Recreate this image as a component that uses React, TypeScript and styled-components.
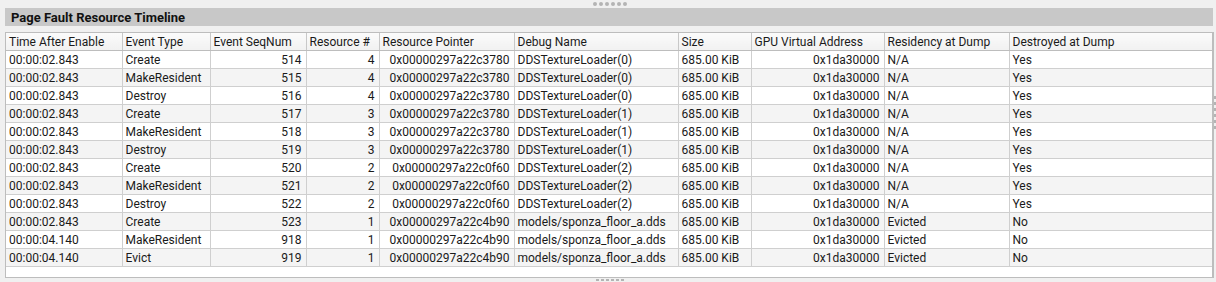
import React from 'react';
import styled, { createGlobalStyle } from 'styled-components';

const GlobalStyle = createGlobalStyle`
  html, body {
    margin: 0;
    padding: 0;
    background: #f0f0f0;
  }
  body {
    font-family: Roboto, 'Liberation Sans', sans-serif;
    color: #1a1a1a;
  }
`;

// Layout
const Page = styled.div`
  width: 1216px;
  height: 282px;
  display: flex;
  background: #f0f0f0;
  overflow: hidden;
`;

const Main = styled.div`
  flex: 1;
  display: flex;
  flex-direction: column;
  padding-left: 5px;
`;

const Grip = styled.div<{ $height: number }>`
  height: ${(p) => p.$height}px;
  display: flex;
  justify-content: center;
  align-items: center;
  gap: 2px;
`;

const Dot = styled.span<{ $square?: boolean }>`
  width: ${(p) => (p.$square ? 3 : 4)}px;
  height: ${(p) => (p.$square ? 2 : 4)}px;
  border-radius: ${(p) => (p.$square ? 0 : 50)}%;
  background: #b4b4b4;
`;

const TitleBar = styled.div`
  height: 18px;
  background: #c8c8c8;
  display: flex;
  align-items: center;
  padding-left: 6px;
  font-size: 13px;
  font-weight: 700;
  color: #111;
  margin-right: 1px;
`;

const Frame = styled.div`
  margin-top: 6px;
  height: 244px;
  border: 1px solid #bdbdbd;
  border-right-width: 2px;
  background: #fff;
  overflow: hidden;
`;

const SideStrip = styled.div`
  width: 3px;
  display: flex;
  flex-direction: column;
  justify-content: flex-start;
  align-items: flex-end;
  padding-top: 96px;
  gap: 3px;
`;

const SideDot = styled.span`
  width: 2px;
  height: 3px;
  background: #b4b4b4;
`;

// Table
const Table = styled.table`
  border-collapse: collapse;
  table-layout: fixed;
  width: 1206px;
  font-size: 12px;
`;

const HeadCell = styled.th`
  height: 17px;
  padding: 0 3px;
  text-align: left;
  font-weight: 400;
  white-space: nowrap;
  overflow: hidden;
  background: linear-gradient(#fbfbfb, #f1f1f1);
  border-left: 1px solid #c8c8c8;
  border-bottom: 1px solid #bdbdbd;
  &:first-child {
    border-left: none;
  }
`;

const Row = styled.tr<{ $alt: boolean }>`
  background: ${(p) => (p.$alt ? '#f4f4f4' : '#ffffff')};
`;

const Cell = styled.td<{ $right?: boolean }>`
  height: 17px;
  padding: 0 ${(p) => (p.$right ? 4 : 3)}px 0 3px;
  text-align: ${(p) => (p.$right ? 'right' : 'left')};
  white-space: nowrap;
  overflow: hidden;
  border-left: 1px solid #cfcfcf;
  border-bottom: 1px solid #cfcfcf;
  &:first-child {
    border-left: none;
  }
`;

const columns: { title: string; width: number; right?: boolean }[] = [
  { title: 'Time After Enable', width: 116 },
  { title: 'Event Type', width: 88 },
  { title: 'Event SeqNum', width: 96, right: true },
  { title: 'Resource #', width: 73, right: true },
  { title: 'Resource Pointer', width: 135, right: true },
  { title: 'Debug Name', width: 164 },
  { title: 'Size', width: 73 },
  { title: 'GPU Virtual Address', width: 133, right: true },
  { title: 'Residency at Dump', width: 125 },
  { title: 'Destroyed at Dump', width: 203 },
];

const P3780 = '0x00000297a22c3780';
const P0f60 = '0x00000297a22c0f60';
const P4b90 = '0x00000297a22c4b90';

const rows: string[][] = [
  ['00:00:02.843', 'Create', '514', '4', P3780, 'DDSTextureLoader(0)', 'Yes'],
  ['00:00:02.843', 'MakeResident', '515', '4', P3780, 'DDSTextureLoader(0)', 'Yes'],
  ['00:00:02.843', 'Destroy', '516', '4', P3780, 'DDSTextureLoader(0)', 'Yes'],
  ['00:00:02.843', 'Create', '517', '3', P3780, 'DDSTextureLoader(1)', 'Yes'],
  ['00:00:02.843', 'MakeResident', '518', '3', P3780, 'DDSTextureLoader(1)', 'Yes'],
  ['00:00:02.843', 'Destroy', '519', '3', P3780, 'DDSTextureLoader(1)', 'Yes'],
  ['00:00:02.843', 'Create', '520', '2', P0f60, 'DDSTextureLoader(2)', 'Yes'],
  ['00:00:02.843', 'MakeResident', '521', '2', P0f60, 'DDSTextureLoader(2)', 'Yes'],
  ['00:00:02.843', 'Destroy', '522', '2', P0f60, 'DDSTextureLoader(2)', 'Yes'],
  ['00:00:02.843', 'Create', '523', '1', P4b90, 'models/sponza_floor_a.dds', 'No'],
  ['00:00:04.140', 'MakeResident', '918', '1', P4b90, 'models/sponza_floor_a.dds', 'No'],
  ['00:00:04.140', 'Evict', '919', '1', P4b90, 'models/sponza_floor_a.dds', 'No'],
];

const toCells = (r: string[]) => [
  r[0],
  r[1],
  r[2],
  r[3],
  r[4],
  r[5],
  '685.00 KiB',
  '0x1da30000',
  r[6] === 'Yes' ? 'N/A' : 'Evicted',
  r[6],
];

export default function App() {
  return (
    <>
      <GlobalStyle />
      <Page>
        <Main>
          <Grip $height={8}>
            {[0, 1, 2, 3, 4, 5].map((i) => (
              <Dot key={i} />
            ))}
          </Grip>
          <TitleBar>Page Fault Resource Timeline</TitleBar>
          <Frame>
            <Table>
              <colgroup>
                {columns.map((c) => (
                  <col key={c.title} style={{ width: c.width }} />
                ))}
              </colgroup>
              <thead>
                <tr>
                  {columns.map((c) => (
                    <HeadCell key={c.title}>{c.title}</HeadCell>
                  ))}
                </tr>
              </thead>
              <tbody>
                {rows.map((r, i) => (
                  <Row key={r[2]} $alt={i % 2 === 1}>
                    {toCells(r).map((v, j) => (
                      <Cell key={j} $right={columns[j].right}>
                        {v}
                      </Cell>
                    ))}
                  </Row>
                ))}
              </tbody>
            </Table>
          </Frame>
          <Grip $height={4}>
            {[0, 1, 2, 3, 4, 5].map((i) => (
              <Dot key={i} $square />
            ))}
          </Grip>
        </Main>
        <SideStrip>
          {[0, 1, 2, 3, 4, 5].map((i) => (
            <SideDot key={i} />
          ))}
        </SideStrip>
      </Page>
    </>
  );
}
